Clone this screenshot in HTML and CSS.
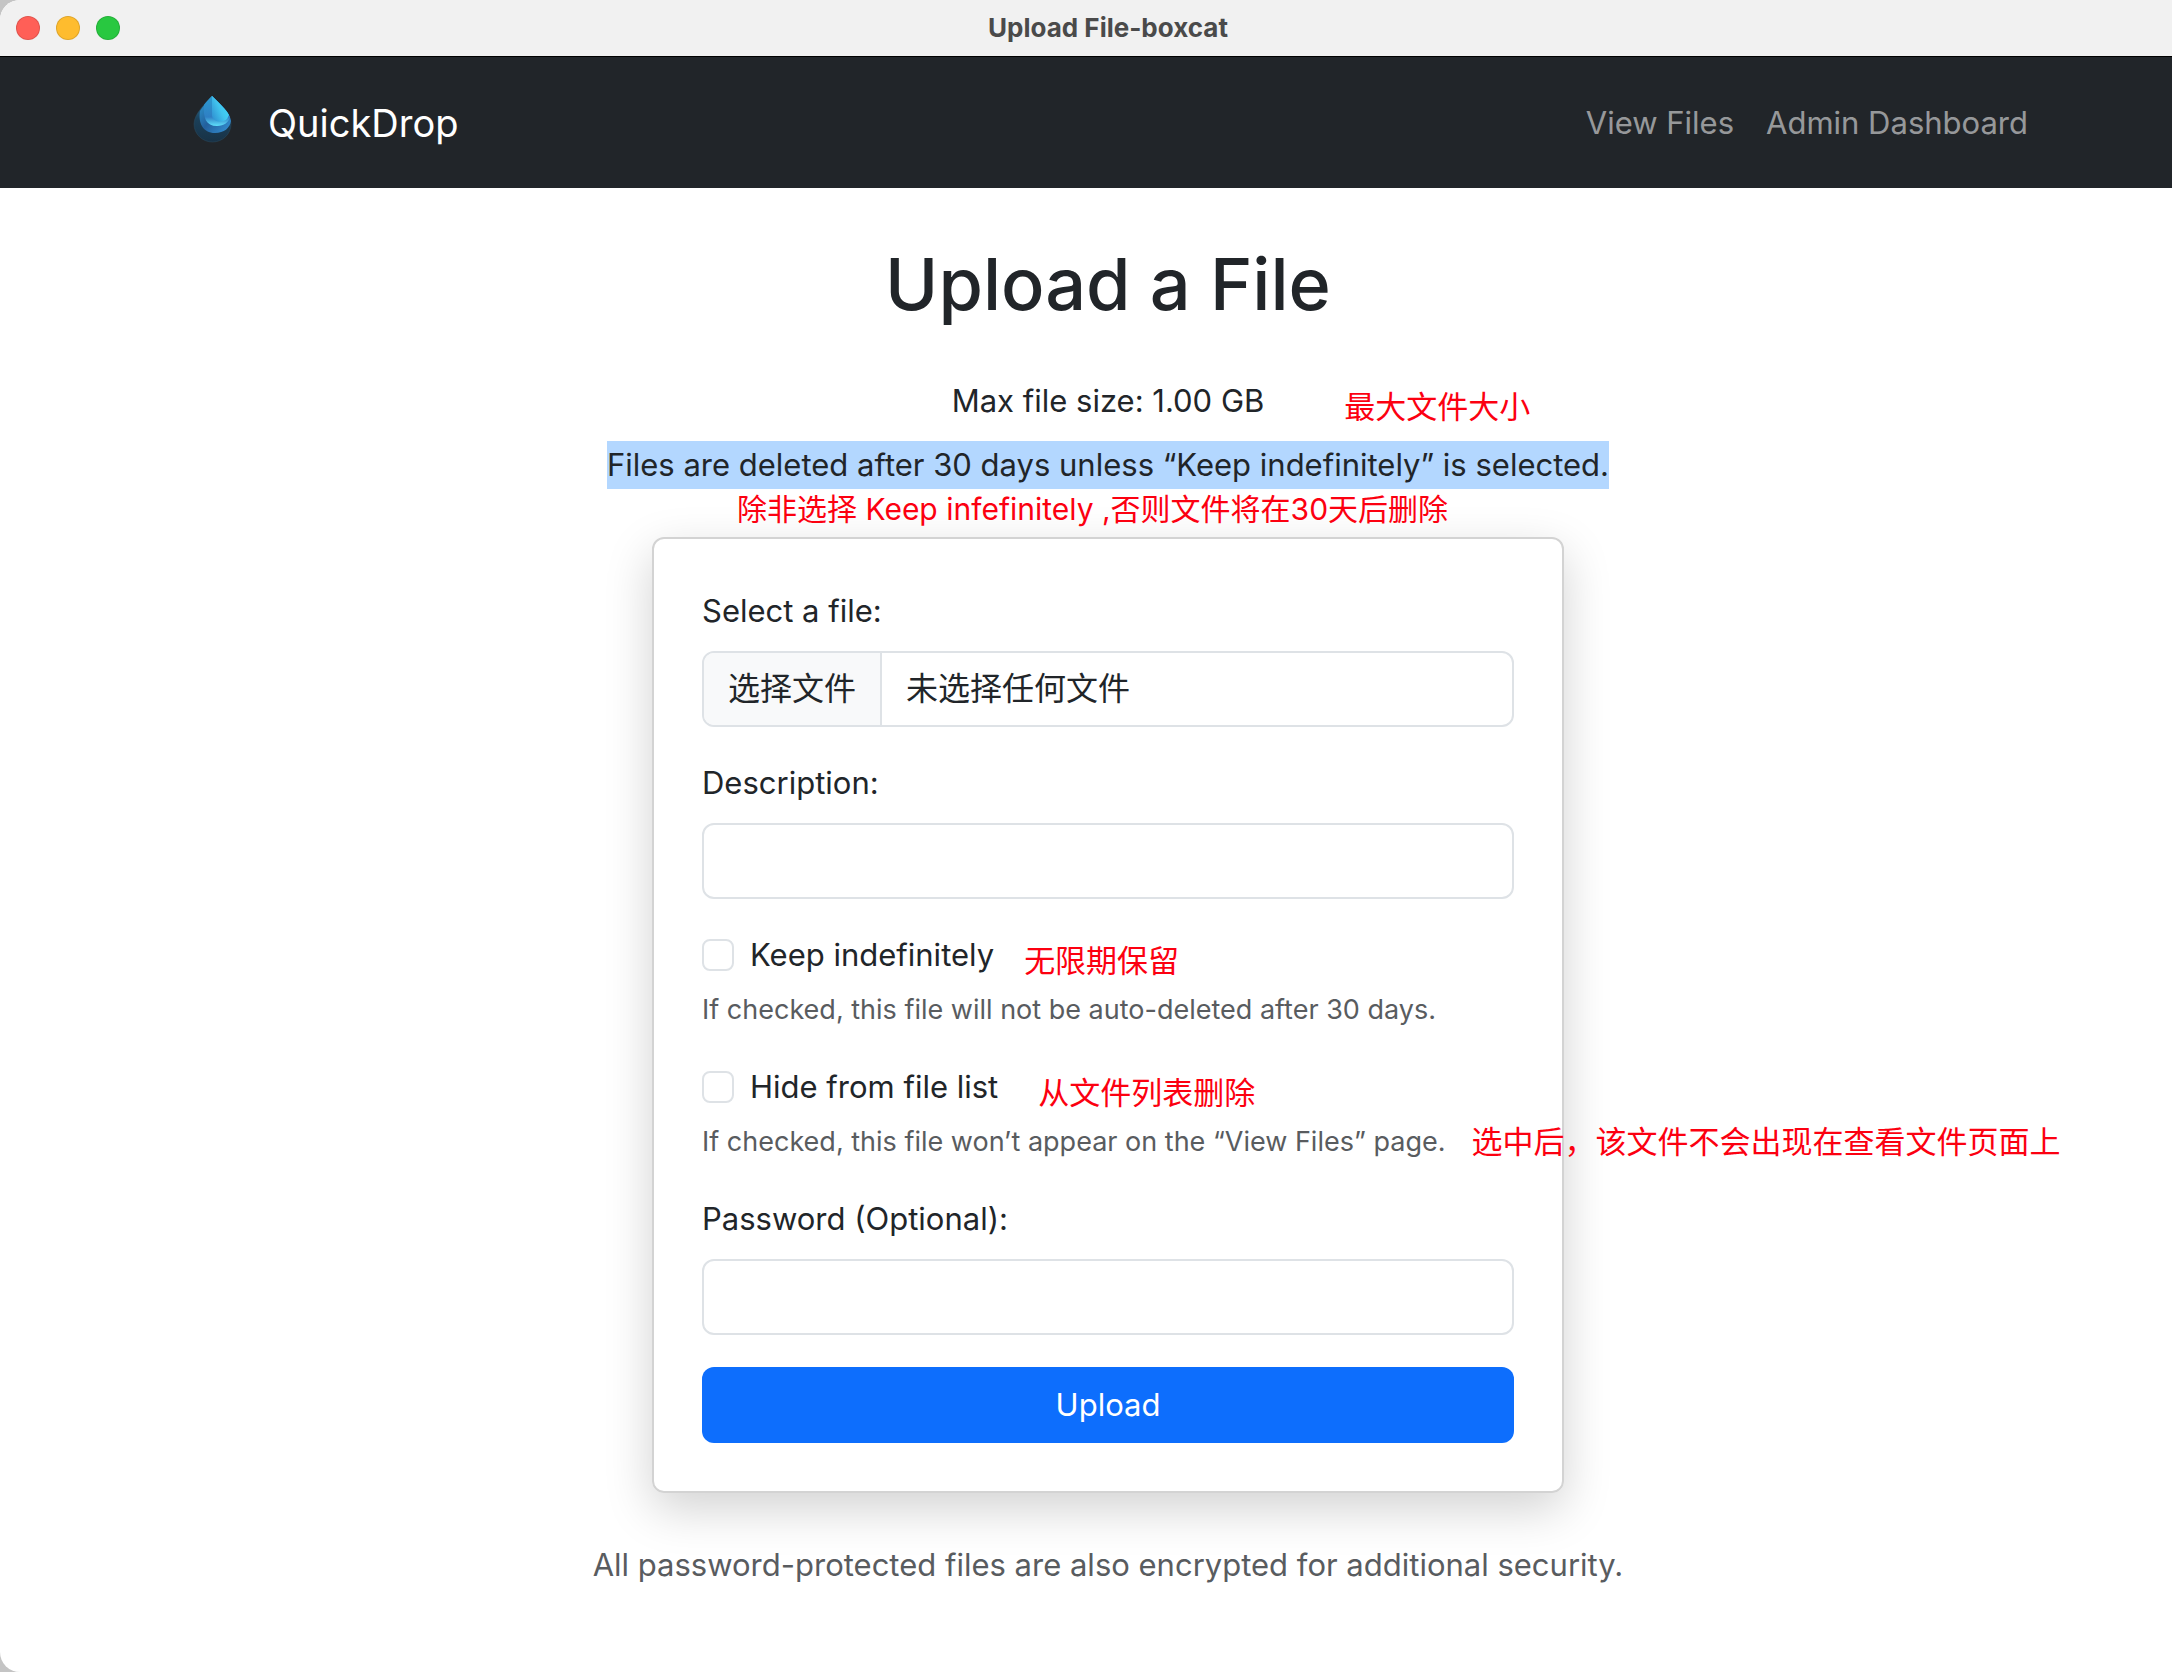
FILE: index.html
```html
<!DOCTYPE html>
<html lang="en">
<head>
	<meta charset="utf-8">
	<title>Upload File-boxcat</title>
	<meta name="viewport" content="width=device-width, initial-scale=1.0">
	<link rel="stylesheet" href="styles.css">
</head>
<body>
	<div class="window">
		<div class="titlebar">
			<div class="lights">
				<span class="light red"></span>
				<span class="light yellow"></span>
				<span class="light green"></span>
			</div>
			<div class="title">Upload File-boxcat</div>
		</div>
		<nav class="navbar">
			<div class="container">
				<a class="brand" href="#">
					<svg class="logo" viewBox="0 0 80 80" aria-hidden="true">
						<defs>
							<linearGradient id="outer" x1="0" y1="0" x2="0" y2="1">
								<stop offset="0" stop-color="#2b7fae"/>
								<stop offset="0.5" stop-color="#1b4059"/>
								<stop offset="1" stop-color="#183246"/>
							</linearGradient>
							<linearGradient id="middle" x1="0" y1="0" x2="1" y2="1">
								<stop offset="0" stop-color="#2f9fd6"/>
								<stop offset="0.5" stop-color="#235f9c"/>
								<stop offset="1" stop-color="#3595d8"/>
							</linearGradient>
							<linearGradient id="inner" x1="0" y1="0" x2="0" y2="1">
								<stop offset="0" stop-color="#2b9bd0"/>
								<stop offset="0.7" stop-color="#2f7fc4"/>
								<stop offset="1" stop-color="#5fe0fb"/>
							</linearGradient>
							<linearGradient id="shine" x1="1" y1="0.2" x2="0" y2="0.9">
								<stop offset="0" stop-color="#3fdcfb"/>
								<stop offset="0.5" stop-color="#41c4ee"/>
								<stop offset="1" stop-color="#2f8fd0"/>
							</linearGradient>
						</defs>
						<path fill="url(#outer)" stroke="#2b4a5e" stroke-width="0.5" d="M40 13C33 21 22 31 22 41a18.500 18 0 0 0 37 0C59 31 48 21 40 13z"/>
						<path fill="url(#middle)" d="M40 13C36 18 31 23 28 28C26 40 31 50 43 50C52 50 58 45 59 38C58 29 48 21 40 13z"/>
						<path fill="url(#inner)" d="M40 13C37 16 34 19 32 22C31 35 34 43 45 43C52 43 57 39 58 34C55 27 47 20 40 13z"/>
						<path fill="url(#shine)" d="M40 13V33C41 38 49 41 55 36L57 32C54 26 47 20 40 13z"/>
					</svg>
					QuickDrop
				</a>
				<div class="links">
					<a href="#">View Files</a>
					<a href="#">Admin Dashboard</a>
				</div>
			</div>
		</nav>
		<main>
			<h1>Upload a File</h1>
			<p class="limit"><span class="noted">Max file size: 1.00 GB<span class="note note-size" lang="zh">最大文件大小</span></span></p>
			<p class="lifetime"><span class="noted"><mark>Files are deleted after 30 days unless “Keep indefinitely” is selected.</mark><span class="note note-below" lang="zh">除非选择 Keep infefinitely ,否则文件将在30天后删除</span></span></p>
			<form class="card">
				<div class="field">
					<label for="file">Select a file:</label>
					<div class="control file">
						<span class="file-button" lang="zh">选择文件</span>
						<span class="file-name" lang="zh">未选择任何文件</span>
						<input id="file" type="file">
					</div>
				</div>
				<div class="field">
					<label for="description">Description:</label>
					<input id="description" class="control" type="text">
				</div>
				<div class="field">
					<div class="check">
						<input id="keep" type="checkbox">
						<label for="keep">Keep indefinitely</label>
						<span class="noted"><span class="note note-keep" lang="zh">无限期保留</span></span>
					</div>
					<div class="help">If checked, this file will not be auto-deleted after 30 days.</div>
				</div>
				<div class="field">
					<div class="check">
						<input id="hide" type="checkbox">
						<label for="hide">Hide from file list</label>
						<span class="noted"><span class="note note-hide" lang="zh">从文件列表删除</span></span>
					</div>
					<div class="help"><span class="noted">If checked, this file won’t appear on the “View Files” page.<span class="note note-help" lang="zh">选中后，该文件不会出现在查看文件页面上</span></span></div>
				</div>
				<div class="field">
					<label for="password">Password (Optional):</label>
					<input id="password" class="control" type="password">
				</div>
				<button type="submit">Upload</button>
			</form>
			<p class="footnote">All password-protected files are also encrypted for additional security.</p>
		</main>
	</div>
</body>
</html>
```
FILE: styles.css
```css
* {
	box-sizing: border-box;
}

body {
	margin: 0;
	overflow: hidden;
	background-color: #c4c4c4;
	color: #212529;
	font-family: Inter, "Noto Sans CJK SC", sans-serif;
	font-size: 31px;
	line-height: 48px;
}

h1, p {
	margin: 0;
}

/* the window runs past the right edge of the screen */
.window {
	width: calc(100% + 44px);
	min-height: 100vh;
	background-color: white;
	border-radius: 20px;
	overflow: hidden;
}

.titlebar {
	display: grid;
	grid-template-columns: 1fr auto 1fr;
	align-items: center;
	height: 57px;
	padding: 0 16px;
	background-color: #f1f1f1;
	border-bottom: 1px solid black;
}

.lights {
	display: flex;
	gap: 16px;
}

.light {
	width: 24px;
	height: 24px;
	border-radius: 50%;
	border: 1px solid rgba(0, 0, 0, 0.12);
}

.red {
	background-color: #ff5f57;
}

.yellow {
	background-color: #febc2e;
}

.green {
	background-color: #28c840;
}

.title {
	color: #4a4a4a;
	font-size: 26px;
	font-weight: 700;
}

.navbar {
	background-color: #212529;
	padding: 16px 0;
}

.container {
	display: flex;
	justify-content: space-between;
	align-items: center;
	max-width: 1920px;
	height: 99px;
	margin: 0 auto;
	padding: 0 24px;
}

.brand {
	display: flex;
	align-items: center;
	gap: 16px;
	color: white;
	font-size: 38px;
	text-decoration: none;
}

.logo {
	width: 80px;
	height: 80px;
}

.links {
	display: flex;
	gap: 32px;
	padding: 0 16px;
}

.links a {
	color: rgba(255, 255, 255, 0.55);
	text-decoration: none;
}

main {
	padding: 48px 24px;
	text-align: center;
}

h1 {
	margin-bottom: 45px;
	font-size: 72px;
	font-weight: 500;
	line-height: 96px;
}

.limit {
	margin-bottom: 16px;
}

.lifetime {
	margin-bottom: 48px;
}

mark {
	display: block;
	background-color: #b3d7ff;
	color: inherit;
}

.card {
	max-width: 912px;
	margin: 0 auto 48px;
	padding: 48px;
	border: 2px solid #d3d3d3;
	border-radius: 12px;
	box-shadow: 0 16px 48px rgba(0, 0, 0, 0.18);
	text-align: left;
}

.field {
	margin-bottom: 32px;
}

.field > label {
	display: block;
	margin-bottom: 16px;
}

.control {
	display: block;
	width: 100%;
	height: 76px;
	padding: 12px 24px;
	border: 2px solid #dee2e6;
	border-radius: 12px;
	background-color: white;
	color: inherit;
	font: inherit;
}

.file {
	position: relative;
	display: flex;
	padding: 0;
	overflow: hidden;
	font-size: 32px;
}

.file span {
	padding: 12px 24px;
}

.file .file-button {
	background-color: #f8f9fa;
	border-right: 2px solid #dee2e6;
}

/* the real input lies over the drawn one */
.file input {
	position: absolute;
	inset: 0;
	width: 100%;
	opacity: 0;
}

.check {
	display: flex;
	align-items: center;
	height: 48px;
	margin-bottom: 10px;
}

.check input {
	appearance: none;
	width: 32px;
	height: 32px;
	margin: 0 16px 0 0;
	border: 2px solid #dee2e6;
	border-radius: 8px;
}

.check input:checked {
	background-color: #0d6efd;
}

.help {
	color: #595c5f;
	font-size: 27px;
	line-height: 42px;
}

button {
	display: block;
	width: 100%;
	height: 76px;
	border: none;
	border-radius: 12px;
	background-color: #0d6efd;
	color: white;
	font: inherit;
}

.footnote {
	color: #595c5f;
}

/* translations written over the page */
.noted {
	position: relative;
	display: inline-block;
}

.note {
	position: absolute;
	top: 6px;
	left: 100%;
	color: #fc0010;
	font-size: 31px;
	line-height: 48px;
	white-space: nowrap;
}

.check .noted {
	align-self: flex-start;
}

.note-size {
	margin-left: 80px;
}

.note-keep {
	margin-left: 30px;
}

.note-hide {
	margin-left: 40px;
}

.note-help {
	top: 0;
	margin-left: 26px;
	line-height: 42px;
}

.note-below {
	top: 44px;
	left: 130px;
	font-size: 30px;
}
```
